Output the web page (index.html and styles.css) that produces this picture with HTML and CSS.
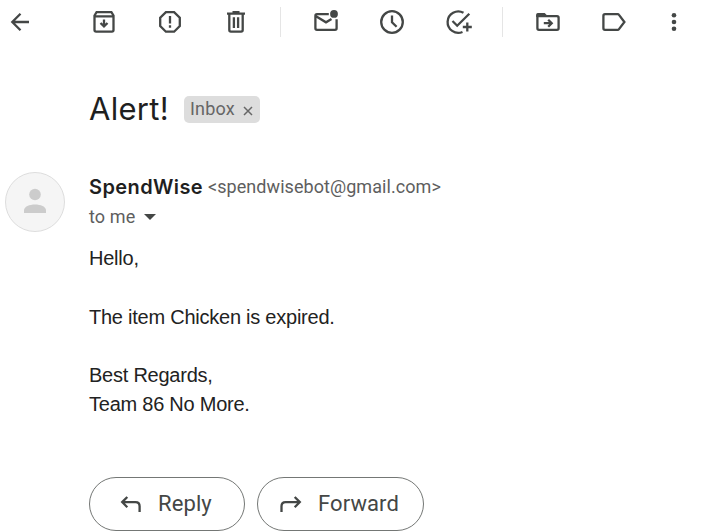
FILE: index.html
```html
<!DOCTYPE html>
<html lang="en">
<head>
<meta charset="utf-8">
<title>Alert!</title>
<link rel="stylesheet" href="styles.css">
</head>
<body>
<header class="toolbar">
  <span class="tool back"><svg viewBox="0 0 30 30"><path d="M24 15H8M15.500 6.800L7.300 15l8.200 8.200"/></svg></span>
  <span class="tool"><svg viewBox="0 0 30 30"><path d="M5.500 8.500L7.600 5.100H22.400L24.500 8.500V23Q24.500 24.600 22.900 24.600H7.100Q5.500 24.600 5.500 23ZM5.500 9.300H24.500M15 12.500V19M11.500 16L15 19.400L18.500 16"/></svg></span>
  <span class="tool"><svg viewBox="0 0 30 30"><path d="M10.900 5.100H19.100L24.800 10.800V19L19.100 24.700H10.900L5.200 19V10.800ZM15 9V16.500M15 18.300V20.700"/></svg></span>
  <span class="tool"><svg viewBox="0 0 30 30"><path d="M6 6.700H24M11.500 5.200H18.500M8.300 7V23Q8.300 24.600 9.900 24.600H20.100Q21.700 24.600 21.700 23V7M12.900 10.300V21M17.100 10.300V21"/></svg></span>
  <span class="divider"></span>
  <span class="tool"><svg viewBox="0 0 30 30"><path d="M17.800 7.200H6Q4.400 7.200 4.400 8.800V21.200Q4.400 22.800 6 22.800H24Q25.600 22.800 25.600 21.200V12.200M5 9.200L15 15.300L20.500 12"/><circle class="solid" cx="23" cy="6.900" r="3.900"/></svg></span>
  <span class="tool"><svg viewBox="0 0 30 30"><circle cx="15" cy="15" r="10.800"/><path d="M15 8.500V15.300L19.600 19.800"/></svg></span>
  <span class="tool"><svg viewBox="0 0 30 30"><path d="M20.500 5.800A10.700 10.700 0 1 0 19.500 25M9.500 14L14.200 18.700L26.300 6.700M24.300 15.500V24.500M19.800 20H28.800"/></svg></span>
  <span class="divider"></span>
  <span class="tool"><svg viewBox="0 0 30 30"><path class="solid" d="M3.200 10V7.500Q3.200 6 4.700 6H11.700L14.700 9V10Z"/><path d="M4.400 9.200H24Q25.600 9.200 25.600 10.800V21.200Q25.600 22.800 24 22.800H6Q4.400 22.800 4.400 21.200ZM10.800 16.200H18M15.200 12.700L18.700 16.200L15.200 19.700"/></svg></span>
  <span class="tool"><svg viewBox="0 0 30 30"><path d="M6 7.200H18.600Q19.500 7.200 20 7.900L25.400 15L20 22.100Q19.500 22.800 18.600 22.800H6Q4.400 22.800 4.400 21.200V8.800Q4.400 7.200 6 7.200Z"/></svg></span>
  <span class="tool more"><svg viewBox="0 0 30 30"><g class="solid"><circle cx="15" cy="8.300" r="2.300"/><circle cx="15" cy="15" r="2.300"/><circle cx="15" cy="21.700" r="2.300"/></g></svg></span>
</header>
<main class="message">
  <div class="subject">
    <h1>Alert!</h1>
    <span class="chip"><span class="chip-label">Inbox</span><svg viewBox="0 0 10 10"><path d="M1 1L9 9M9 1L1 9"/></svg></span>
  </div>
  <div class="sender">
    <svg class="avatar" viewBox="0 0 60 60"><circle class="disc" cx="30" cy="30" r="29.500"/><circle class="person" cx="30" cy="22.500" r="5.800"/><path class="person" d="M19 41V38.500C19 30.500 41 30.500 41 38.500V41Z"/></svg>
    <div class="identity">
      <div class="from"><span class="name">SpendWise</span><span class="email">&lt;spendwisebot@gmail.com&gt;</span></div>
      <div class="to"><span class="recipient">to me</span><span class="caret"></span></div>
    </div>
  </div>
  <div class="body">
    <p>Hello,</p>
    <p>The item Chicken is expired.</p>
    <p>Best Regards,<br>Team 86 No More.</p>
  </div>
  <div class="actions">
    <button class="reply"><svg viewBox="0 0 24 24"><path d="M8.300 5L3.200 10.100L8.300 15.200M3.500 10.100H16.500Q20.600 10.100 20.600 14.200V20"/></svg><span>Reply</span></button>
    <button class="forward"><svg viewBox="0 0 24 24"><path d="M15.700 5L20.800 10.100L15.700 15.200M20.500 10.100H6.600Q2.500 10.100 2.500 14.200V20"/></svg><span>Forward</span></button>
  </div>
</main>
</body>
</html>
```
FILE: styles.css
```css
* { box-sizing: border-box; }
body { margin: 0; height: 532px; overflow: hidden; background: #fff; color: #222; font-family: Roboto, "Liberation Sans", sans-serif; }
svg { display: block; fill: none; stroke: #444746; stroke-width: 2.3; flex: none; }
.solid { fill: #444746; stroke: none; }

.toolbar { display: flex; align-items: center; height: 44px; }
.tool { display: flex; justify-content: center; width: 66px; }
.tool svg { width: 30px; height: 30px; }
.back { width: 40px; margin-right: 31px; }
.more { width: 54px; }
.divider { width: 1px; height: 30px; margin: 0 12px 0 11px; background: #e5e5e5; }

.message { padding-left: 5px; }
.subject { display: flex; align-items: center; height: 40px; margin: 45px 0 0 84px; }
h1 { margin: 0; width: 95px; font: 400 31px/40px Inter, sans-serif; color: #1f1f1f; white-space: nowrap; letter-spacing: 0.3px; }
.chip { display: flex; align-items: center; justify-content: space-between; width: 76px; height: 27px; padding: 0 7px 0 6px; border-radius: 5px; background: #ddd; color: #666; font-size: 18px; }
.chip-label { padding-bottom: 1px; letter-spacing: 0.2px; }
.chip svg { width: 10px; height: 10px; margin-top: 4px; stroke: #666; stroke-width: 1.5; }

.sender { display: flex; height: 60px; margin-top: 43px; }
.avatar { width: 60px; height: 60px; }
.disc { fill: #f5f5f5; stroke: #ddd; stroke-width: 1; }
.person { fill: #ccc; stroke: none; }
.identity { margin-left: 24px; }
.from, .to { display: flex; align-items: center; height: 30px; white-space: nowrap; }
.name { width: 119px; font: 600 20px Inter, sans-serif; letter-spacing: 0.4px; color: #1f1f1f; }
.email { padding-bottom: 2px; font-size: 18px; letter-spacing: 0.06px; color: #5e5e5e; }
.recipient { padding-bottom: 2px; font-size: 18px; letter-spacing: 0.1px; color: #5e5e5e; }
.caret { margin-left: 9px; border: 6px solid transparent; border-top-color: #444746; border-bottom: 0; }

.body { margin: 12px 0 0 84px; font: 20px/29.300px "Liberation Sans", Arial, sans-serif; letter-spacing: -0.24px; }
.body p { margin: 0 0 29.300px; }

.actions { display: flex; gap: 12px; margin: 57px 0 0 84px; }
.actions button { display: flex; align-items: center; height: 54px; padding: 0 0 0 29px; border: 1px solid #747775; border-radius: 27px; background: #fff; color: #444746; font: 450 22px Roboto, sans-serif; letter-spacing: 0.1px; white-space: nowrap; }
.actions svg { width: 24px; height: 24px; margin-right: 15px; }
.reply { width: 156px; }
.forward { width: 167px; }
.actions .forward { padding-left: 21px; }
```
